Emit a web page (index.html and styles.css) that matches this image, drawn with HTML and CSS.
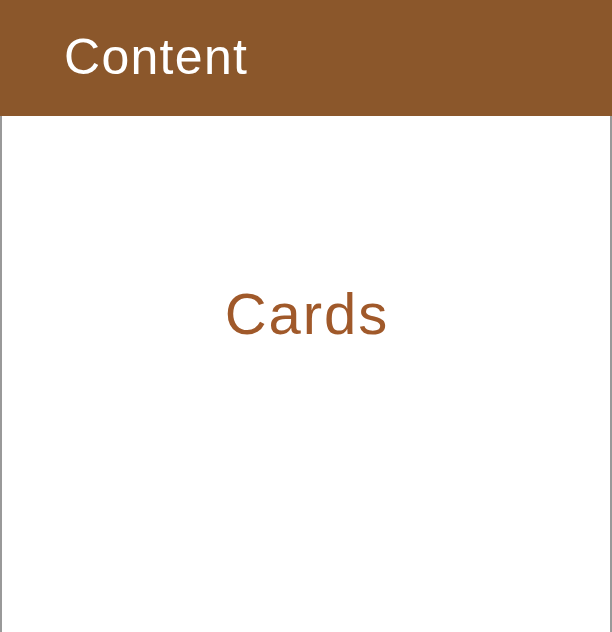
FILE: index.html
```html
<!DOCTYPE html>
<html>
<head>
<meta charset="utf-8">
<link rel="stylesheet" href="styles.css">
</head>
<body>
<header class="bar"><span class="bar-title">Content</span></header>
<main class="panel">
  <div class="card-area"><span class="card-label">Cards</span></div>
</main>
</body>
</html>
```
FILE: styles.css
```css
html, body {
  margin: 0;
  padding: 0;
  height: 100%;
  background: #fff;
}
body {
  display: flex;
  flex-direction: column;
  font-family: "Liberation Sans", Arial, sans-serif;
}
.bar {
  height: 116px;
  background: #8b572b;
  display: flex;
  align-items: center;
  padding-left: 64px;
  box-sizing: border-box;
  flex: none;
}
.bar-title {
  color: #fff;
  font-size: 50px;
  letter-spacing: 1.3px;
  line-height: 1;
  margin-top: -2px;
}
.panel {
  flex: 1;
  border-left: 2px solid #999;
  border-right: 2px solid #999;
}
.card-area {
  height: 396px;
  display: flex;
  align-items: center;
  justify-content: center;
}
.card-label {
  color: #a0592a;
  font-size: 58px;
  letter-spacing: 2px;
  line-height: 1;
  padding-left: 2px;
}
```
